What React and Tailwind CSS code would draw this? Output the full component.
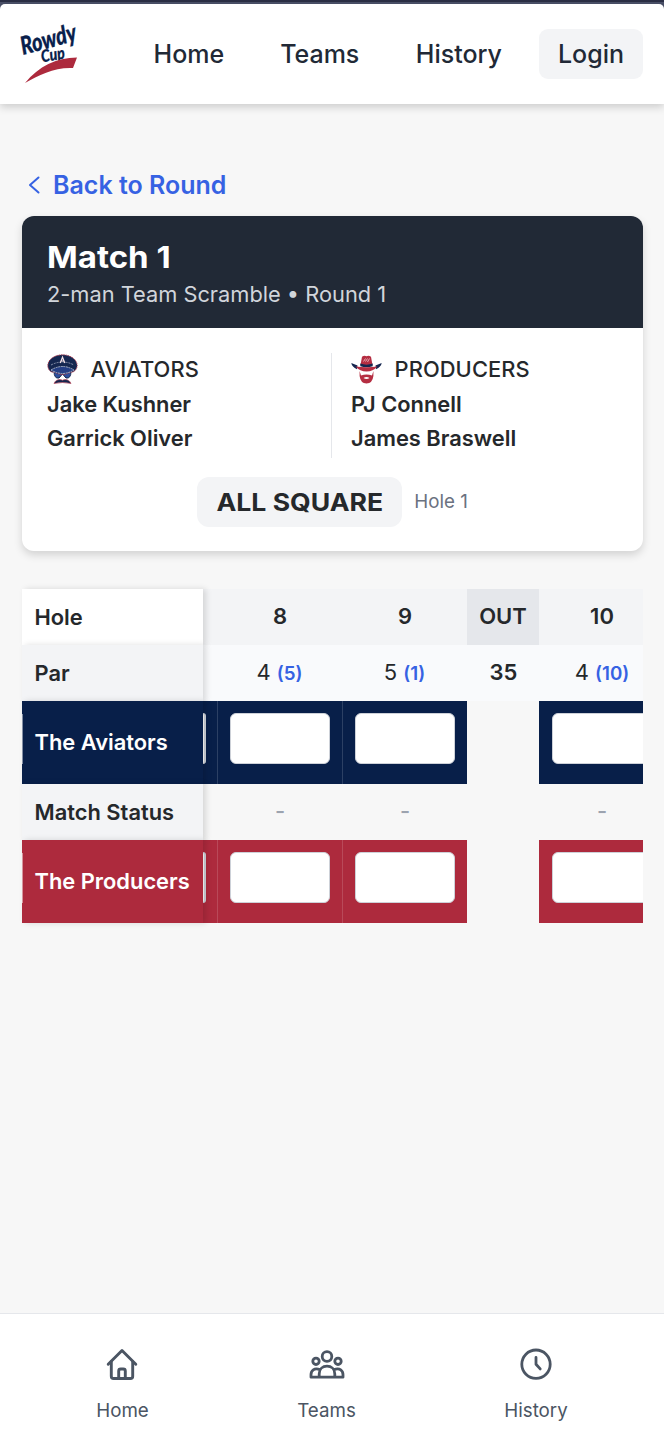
import React from "react";

const Logo = () => (
  <svg className="h-[64px] w-[60px] shrink-0 overflow-visible" viewBox="0 0 60 64" role="img">
    <g fill="#08204b" fontFamily="Lato, sans-serif" fontWeight="900" fontStyle="italic" stroke="#08204b">
      <text x="2" y="33" fontSize="25" textLength="57" lengthAdjust="spacingAndGlyphs" transform="rotate(-15 2 33)" strokeWidth=".3">Rowdy</text>
      <text x="21" y="40.5" fontSize="17" textLength="24" lengthAdjust="spacingAndGlyphs" transform="rotate(-10 21 40.5)" strokeWidth=".2">Cup</text>
    </g>
    <path d="M4 61 C18 44 35 36 56 35.5 L52 46 C34 45 18 53 4 61Z" fill="#ad2a3d" />
  </svg>
);

const AviatorLogo = () => (
  <svg className="size-[31px]" viewBox="0 0 31 31">
    <path d="M7 17 Q7 25 12 24 L15.5 20 L19 24 Q24 25 24 17Z" fill="#2c4f9e" stroke="#15264f" />
    <path d="M.8 11.5 C1 5 8 .8 15.5 .8 S30 5 30.2 11.5 C30 16 26 19 24 18 Q15.5 23 7 18 C4 19 1 16 .8 11.5Z" fill="#152750" stroke="#ad3c50" strokeWidth=".9" strokeDasharray="1.5 .8" />
    <path d="M4 16 Q15.5 9 27 16 Q15.5 23 4 16Z" fill="#253f85" stroke="#c9d0df" strokeWidth=".8" strokeDasharray="2 .6" />
    <path d="M4 11 Q15.5 5 27 11" fill="none" stroke="#b9bfd0" strokeWidth=".7" strokeDasharray="2 1" />
    <path d="M13.2 9 L15.5 3.2 L17.8 9 M14 7 h3" fill="none" stroke="#f1dfe3" strokeWidth="1.2" />
    <path d="M7 29.5 C8.5 25.5 13 24.8 15.5 26.3 C18 24.8 22.5 25.5 24 29.5 Q15.5 27.5 7 29.5Z" fill="#15264f" stroke="#b94b5d" strokeWidth=".7" />
  </svg>
);

const ProducerLogo = () => (
  <svg className="size-[31px]" viewBox="0 0 31 31">
    <path d="M.3 9 L6.5 11.5 L6 15.2 Q1 13 .3 9Z M30.7 9 L24.5 11.5 L25 15.2 Q30 13 30.7 9Z" fill="#14264f" />
    <path d="M9.5 11 L11 2.8 Q13.5 .8 15.5 2.3 Q17.5 .8 20 2.8 L21.5 11Z" fill="#b52e42" />
    <path d="M9.3 9.6 Q15.5 11.8 21.7 9.6 V12.3 Q15.5 14.3 9.3 12.3Z" fill="#14264f" />
    <path d="M4.5 12.5 Q15.5 14 26.5 12.5 Q22 17.5 15.5 17.5 Q9 17.5 4.5 12.5Z" fill="#b52e42" />
    <path d="M12.5 7.5 l2-3 m0 3 l2-3 m0 3.5 l2-3.5" fill="none" stroke="#f0c9cf" strokeWidth=".8" />
    <path d="M8.6 17 V22 Q9.5 29.3 15.5 29.6 Q21.5 29.3 22.4 22 V17 L21 21.5 Q15.5 19.5 10 21.5Z" fill="#b52e42" />
    <path d="M12.5 24 Q15.5 21.8 18.5 24 Q15.5 25.8 12.5 24Z" fill="#fff" />
  </svg>
);

const HomeIcon = () => (
  <svg className="size-[38px]" viewBox="0 0 38 38" fill="none" stroke="#4b5563" strokeWidth="2.9" strokeLinecap="round" strokeLinejoin="round">
    <path d="M5.2 19.3 L19 5.500 L32.8 19.3" />
    <path d="M8.3 16.7 V31.2 Q8.3 33.5 10.6 33.5 H27.4 Q29.7 33.5 29.7 31.2 V16.7" />
    <path d="M15.7 33.2 V26 Q15.7 24 17.7 24 H20.3 Q22.3 24 22.3 26 V33.2" />
  </svg>
);

const TeamsIcon = () => (
  <svg className="size-[38px]" viewBox="0 0 38 38" fill="none" stroke="#4b5563" strokeWidth="2.8" strokeLinejoin="round">
    <circle cx="19" cy="11.5" r="4.8" />
    <circle cx="8" cy="16.3" r="3.2" />
    <circle cx="30" cy="16.3" r="3.2" />
    <path d="M11.2 32.2 V29 C11.2 24 14.7 21.2 19 21.2 S26.8 24 26.8 29 V32.2" />
    <path d="M12 24.5 C6 22.5 3 25.5 3 29.8 V32.2 H35 V29.8 C35 25.5 32 22.5 26 24.5" />
  </svg>
);

const ClockIcon = () => (
  <svg className="size-[38px]" viewBox="0 0 38 38" fill="none" stroke="#4b5563" strokeWidth="2.8" strokeLinecap="round" strokeLinejoin="round">
    <circle cx="19" cy="19.2" r="14.2" />
    <path d="M19 12.5 V19.2 L23.2 23.9" />
  </svg>
);

const Score = () => <div className="h-[51px] w-[100px] shrink-0 rounded-md border-[1.5px] border-[#cdd1d8] bg-white" />;

const label = "relative z-10 flex items-center text-[21.875px] font-semibold shadow-[3px_0_6px_rgba(0,0,0,0.13)] whitespace-nowrap";

function TeamRow({ name, color }) {
  return (
    <>
      <div className={`${label} pl-[12.5px] text-white ${color}`}>
        <i className="absolute top-[13px] left-0 h-[50px] w-px bg-white/50" />
        {name}
      </div>
      <div className={`flex overflow-hidden pt-3 ${color}`}>
        <div className="h-[51px] w-[3px] rounded-r-md border-y border-r-2 border-[#cdd1d8] bg-white" />
      </div>
      <div className={`border-l border-white/15 pt-3 pl-3 ${color}`}><Score /></div>
      <div className={`border-l border-white/15 pt-3 pl-3 ${color}`}><Score /></div>
      <div />
      <div className={`overflow-hidden pt-3 pl-[12.5px] ${color}`}><Score /></div>
    </>
  );
}

const Par = ({ par, rank }) => (
  <div className="flex items-center justify-center bg-[#f9fafc]">
    <div className="flex items-baseline gap-[6px] text-[22px]">
      <span>{par}</span>
      <span className="text-[18.75px] font-semibold text-[#3662e3]">({rank})</span>
    </div>
  </div>
);

function Team({ logo, name, players }) {
  return (
    <div className="text-[21.875px] font-semibold">
      <div className="flex h-8 items-center gap-[12.5px] font-medium">{logo}<span className="tracking-[0.1px]">{name}</span></div>
      <div className="mt-[2px] leading-[34px]">{players.map((p) => <div key={p}>{p}</div>)}</div>
    </div>
  );
}

const tabs = [["Home", HomeIcon], ["Teams", TeamsIcon], ["History", ClockIcon]];

export default function App() {
  return (
    <div className="flex h-[1450px] w-[664px] flex-col bg-[#f7f7f7] font-['Inter',sans-serif] text-[#25282b]">
      <div className="shrink-0 border-t-2 border-[#2b2f45] bg-[#4a5068] pt-[2px]">
        <header className="flex h-[100px] items-center justify-between rounded-t-[5px] bg-white pr-[21px] pl-[21px] shadow-[0_3px_9px_rgba(0,0,0,0.18)]">
          <Logo />
          <nav className="flex items-center text-[25px] font-medium text-[#212936]">
            <a className="mr-[56px] pt-[2px]">Home</a>
            <a className="mr-[56.5px] pt-[2px]">Teams</a>
            <a className="mr-[37px] pt-[2px]">History</a>
            <a className="flex h-[50px] w-[104px] items-center justify-center rounded-[9px] bg-[#f3f4f6] pt-[2px]">Login</a>
          </nav>
        </header>
      </div>

      <main className="flex flex-1 flex-col px-[22px] pt-[62px] pr-[21px]">
        <a className="flex h-[38px] items-center text-[25px] font-semibold text-[#3662e3]">
          <svg className="mr-[13px] ml-[6px] h-[18px] w-3" viewBox="0 0 12 18" fill="none" stroke="currentColor" strokeWidth="2" strokeLinecap="round" strokeLinejoin="round"><path d="M10.5 1.5 L2 9 L10.5 16.5" /></svg>
          <span className="pt-[2px]">Back to Round</span>
        </a>

        <section className="mt-[12.4px] h-[335px] shrink-0 overflow-hidden rounded-[12px] bg-white shadow-[0_4px_9px_rgba(0,0,0,0.15)]">
          <div className="h-[112px] bg-[#212936] pt-[21px] pl-[25px]">
            <h1 className="origin-left scale-x-[1.1] text-[30px] leading-[40px] font-bold text-white">Match 1</h1>
            <p className="text-[21.8px] leading-[34px] text-[#d1d5db]">2-man Team Scramble • Round 1</p>
          </div>
          <div className="grid grid-cols-[284px_1fr] px-[25px] pt-[25px]">
            <Team logo={<AviatorLogo />} name="AVIATORS" players={["Jake Kushner", "Garrick Oliver"]} />
            <div className="h-[105px] border-l-[1.5px] border-[#e5e7eb] pl-[19px]">
              <Team logo={<ProducerLogo />} name="PRODUCERS" players={["PJ Connell", "James Braswell"]} />
            </div>
          </div>
          <div className="mt-[19px] flex items-center justify-center gap-[12px]">
            <div className="flex h-[50px] w-[205px] items-center justify-center rounded-[12px] bg-[#f3f4f6] text-[24.5px] font-bold whitespace-nowrap"><span className="inline-block scale-x-[1.085]">ALL SQUARE</span></div>
            <span className="text-[18.75px] text-[#6b7280]">Hole 1</span>
          </div>
        </section>

        <section className="mt-[37.6px] grid w-[621px] grid-cols-[181px_14px_125px_125px_72px_104px] grid-rows-[56px_56px_83px_56px_83px]">
          <div className={`${label} bg-white pl-[12.5px]`}>Hole</div>
          <div className="bg-[#f3f4f6]" />
          <div className="flex items-center justify-center bg-[#f3f4f6] pl-px text-[22px] font-semibold">8</div>
          <div className="flex items-center justify-center bg-[#f3f4f6] pl-px text-[22px] font-semibold">9</div>
          <div className="flex items-center justify-center bg-[#e5e7eb] text-[22px] font-semibold">OUT</div>
          <div className="flex overflow-hidden bg-[#f3f4f6] text-[22px] font-semibold"><div className="flex w-[125px] shrink-0 items-center justify-center pl-px">10</div></div>

          <div className={`${label} bg-[#f3f4f6] pl-[12.5px]`}>Par</div>
          <div className="bg-[#f9fafc]" />
          <Par par="4" rank="5" />
          <Par par="5" rank="1" />
          <div className="flex items-center justify-center bg-[#f9fafc] pl-px text-[22px] font-semibold">35</div>
          <div className="grid grid-cols-[126px] overflow-hidden"><Par par="4" rank="10" /></div>

          <TeamRow name="The Aviators" color="bg-[#081f49]" />

          <div className={`${label} bg-[#f3f4f6] pl-[12.5px]`}>Match Status</div>
          <div />
          <div className="flex items-center justify-center pl-px text-[22px] font-medium text-[#9ca3af]">-</div>
          <div className="flex items-center justify-center pl-px text-[22px] font-medium text-[#9ca3af]">-</div>
          <div />
          <div className="flex overflow-hidden text-[22px] font-medium text-[#9ca3af]"><div className="flex w-[125px] shrink-0 items-center justify-center pl-px">-</div></div>

          <TeamRow name="The Producers" color="bg-[#ad2a3d]" />
        </section>
      </main>

      <footer className="flex h-[137px] shrink-0 justify-around border-t-[1.5px] border-[#e5e7eb] bg-white px-[22px] pt-[31px] text-[18.75px] text-[#4b5563]">
        {tabs.map(([name, Icon]) => (
          <div key={name} className="flex flex-col items-center">
            <Icon />
            <span className="mt-[14px] leading-[28px]">{name}</span>
          </div>
        ))}
      </footer>
    </div>
  );
}
